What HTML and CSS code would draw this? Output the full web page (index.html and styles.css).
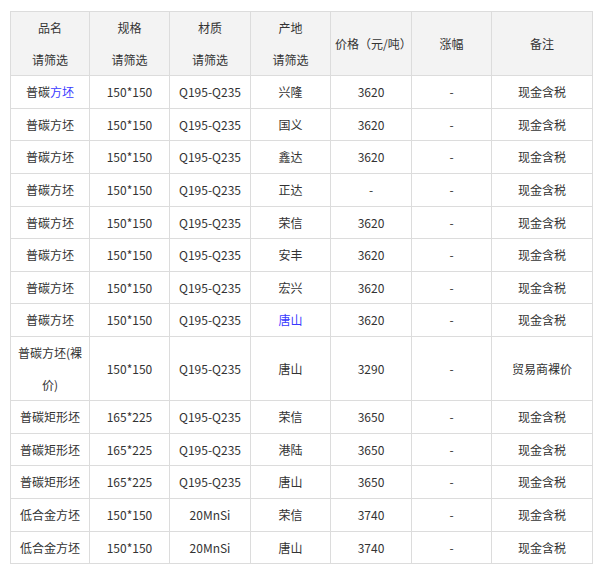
FILE: index.html
```html
<!DOCTYPE html>
<html lang="zh">
<head>
<meta charset="utf-8">
<link rel="stylesheet" href="styles.css">
</head>
<body>
<table class="price-table">
  <colgroup>
    <col class="c1"><col class="c2"><col class="c3"><col class="c4"><col class="c5"><col class="c6"><col class="c7">
  </colgroup>
  <thead>
    <tr>
      <th>品名<br>请筛选</th>
      <th>规格<br>请筛选</th>
      <th>材质<br>请筛选</th>
      <th>产地<br>请筛选</th>
      <th>价格（元/吨）</th>
      <th>涨幅</th>
      <th>备注</th>
    </tr>
  </thead>
  <tbody>
    <tr><td>普碳<span class="link">方坯</span></td><td>150*150</td><td>Q195-Q235</td><td>兴隆</td><td>3620</td><td>-</td><td>现金含税</td></tr>
    <tr><td>普碳方坯</td><td>150*150</td><td>Q195-Q235</td><td>国义</td><td>3620</td><td>-</td><td>现金含税</td></tr>
    <tr><td>普碳方坯</td><td>150*150</td><td>Q195-Q235</td><td>鑫达</td><td>3620</td><td>-</td><td>现金含税</td></tr>
    <tr><td>普碳方坯</td><td>150*150</td><td>Q195-Q235</td><td>正达</td><td>-</td><td>-</td><td>现金含税</td></tr>
    <tr><td>普碳方坯</td><td>150*150</td><td>Q195-Q235</td><td>荣信</td><td>3620</td><td>-</td><td>现金含税</td></tr>
    <tr><td>普碳方坯</td><td>150*150</td><td>Q195-Q235</td><td>安丰</td><td>3620</td><td>-</td><td>现金含税</td></tr>
    <tr><td>普碳方坯</td><td>150*150</td><td>Q195-Q235</td><td>宏兴</td><td>3620</td><td>-</td><td>现金含税</td></tr>
    <tr><td>普碳方坯</td><td>150*150</td><td>Q195-Q235</td><td><span class="link">唐山</span></td><td>3620</td><td>-</td><td>现金含税</td></tr>
    <tr><td>普碳方坯(裸<br>价)</td><td>150*150</td><td>Q195-Q235</td><td>唐山</td><td>3290</td><td>-</td><td>贸易商裸价</td></tr>
    <tr><td>普碳矩形坯</td><td>165*225</td><td>Q195-Q235</td><td>荣信</td><td>3650</td><td>-</td><td>现金含税</td></tr>
    <tr><td>普碳矩形坯</td><td>165*225</td><td>Q195-Q235</td><td>港陆</td><td>3650</td><td>-</td><td>现金含税</td></tr>
    <tr><td>普碳矩形坯</td><td>165*225</td><td>Q195-Q235</td><td>唐山</td><td>3650</td><td>-</td><td>现金含税</td></tr>
    <tr><td>低合金方坯</td><td>150*150</td><td>20MnSi</td><td>荣信</td><td>3740</td><td>-</td><td>现金含税</td></tr>
    <tr><td>低合金方坯</td><td>150*150</td><td>20MnSi</td><td>唐山</td><td>3740</td><td>-</td><td>现金含税</td></tr>
  </tbody>
</table>
</body>
</html>
```
FILE: styles.css
```css
html, body {
  margin: 0;
  padding: 0;
  background: #fff;
}
body {
  padding: 11px 0 0 10px;
  font-family: "Noto Sans CJK SC", "Noto Sans", sans-serif;
  font-size: 12px;
  color: #333;
}
.price-table {
  border-collapse: collapse;
  table-layout: fixed;
  width: 582px;
}
.c1 { width: 79px; }
.c2 { width: 80px; }
.c3 { width: 81px; }
.c4 { width: 80px; }
.c5 { width: 81px; }
.c6 { width: 80px; }
.c7 { width: 101px; }
.price-table th,
.price-table td {
  border: 1px solid #dcdcdc;
  text-align: center;
  vertical-align: middle;
  padding: 0 4px;
  line-height: 31.6px;
  font-weight: normal;
}
.price-table th {
  background: #f3f3f3;
}
.link {
  color: #3a3aff;
}
```
